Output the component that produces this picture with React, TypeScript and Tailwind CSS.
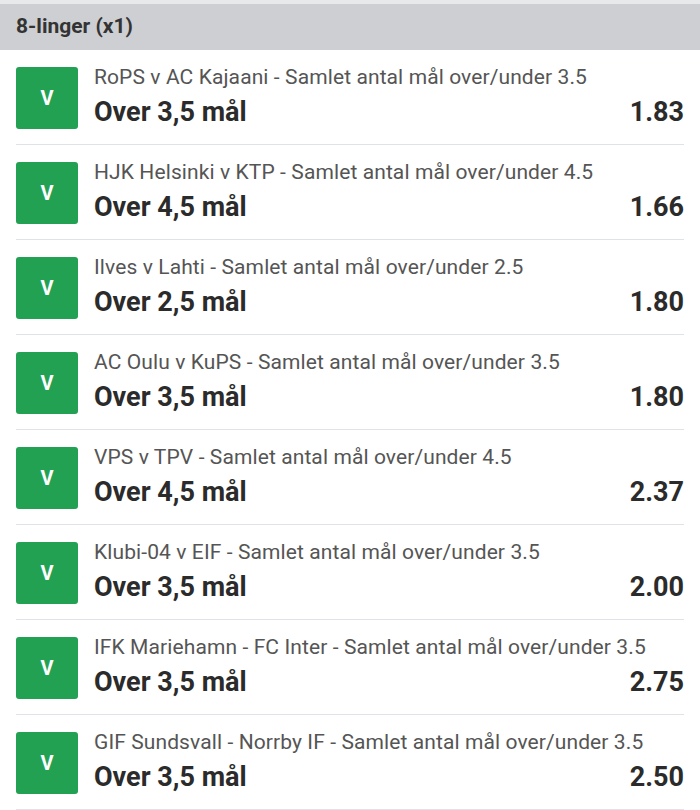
import React from "react";

const rows = [
  { t: "RoPS v AC Kajaani - Samlet antal mål over/under 3.5", s: "Over 3,5 mål", o: "1.83" },
  { t: "HJK Helsinki v KTP - Samlet antal mål over/under 4.5", s: "Over 4,5 mål", o: "1.66" },
  { t: "Ilves v Lahti - Samlet antal mål over/under 2.5", s: "Over 2,5 mål", o: "1.80" },
  { t: "AC Oulu v KuPS - Samlet antal mål over/under 3.5", s: "Over 3,5 mål", o: "1.80" },
  { t: "VPS v TPV - Samlet antal mål over/under 4.5", s: "Over 4,5 mål", o: "2.37" },
  { t: "Klubi-04 v EIF - Samlet antal mål over/under 3.5", s: "Over 3,5 mål", o: "2.00" },
  { t: "IFK Mariehamn - FC Inter - Samlet antal mål over/under 3.5", s: "Over 3,5 mål", o: "2.75" },
  { t: "GIF Sundsvall - Norrby IF - Samlet antal mål over/under 3.5", s: "Over 3,5 mål", o: "2.50" },
];

export default function App() {
  return (
    <div className="w-[700px] h-[810px] overflow-hidden bg-white" style={{ fontFamily: "Roboto, 'Noto Sans', sans-serif" }}>
      <div className="h-[4px] bg-[#e8e9eb]" />
      <div className="h-[46px] bg-[#cdcfd2] flex items-center px-4">
        <span className="text-[21px] font-bold text-[#333333]">8-linger (x1)</span>
      </div>
      <div className="mx-4">
        {rows.map((r, i) => (
          <div key={i} className="flex items-start gap-4 pt-[17px] pb-[15px] border-b border-[#dfe3e8]">
            <div className="w-[62px] h-[62px] shrink-0 rounded-[3px] bg-[#22a152] flex items-center justify-center text-white font-bold text-[20px]">
              V
            </div>
            <div className="flex-1 flex flex-col mt-[-2px]">
              <div className="text-[21px] tracking-[0.1px] leading-[24px] text-[#555555] whitespace-nowrap">{r.t}</div>
              <div className="flex justify-between items-center mt-[8px] text-[27px] leading-[30px] font-bold text-[#2b2b2b]">
                <span>{r.s}</span>
                <span>{r.o}</span>
              </div>
            </div>
          </div>
        ))}
      </div>
    </div>
  );
}
